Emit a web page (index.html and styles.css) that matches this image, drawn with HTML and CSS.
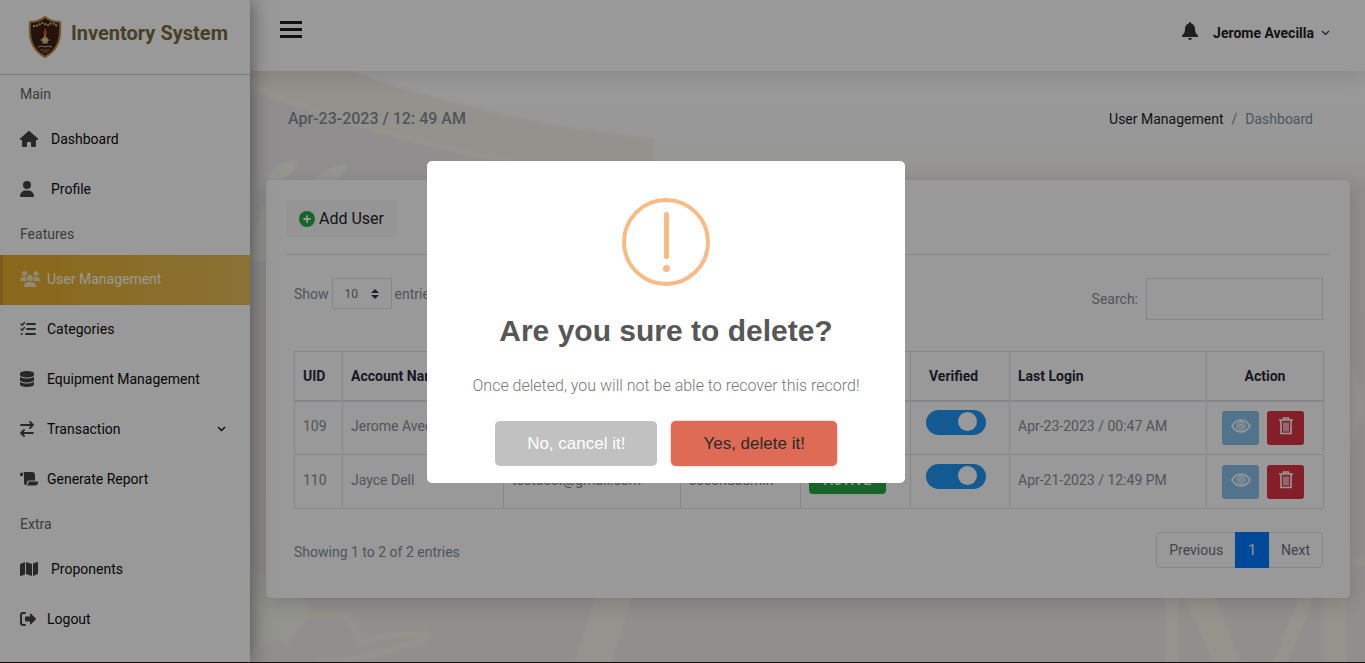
FILE: index.html
```html
<!DOCTYPE html>
<html lang="en">
<head>
<meta charset="utf-8">
<meta name="viewport" content="width=device-width, initial-scale=1">
<title>Inventory System</title>
<link rel="stylesheet" href="styles.css">
</head>
<body>
<div class="app">
  <aside class="sidebar">
    <div class="brand">
      <svg class="brand-logo" width="34" height="42" viewBox="0 0 34 42" aria-hidden="true">
        <path d="M17 1C12 5 7 6 2 6C1 20 2 33 17 41C32 33 33 20 32 6C27 6 22 5 17 1Z" fill="#3c1f18" stroke="#c48a3a" stroke-width="2"/>
        <path d="M5 10Q10 10 12 8T17 8T22 8T29 10" fill="none" stroke="#cdbb84" stroke-width="2" stroke-dasharray="2 1"/>
        <path d="M17 12C20 16 19 18 17 20C15 18 15 16 17 12Z" fill="#c9502a"/>
        <path d="M16 18h2v4h-2z" fill="#e0893a"/>
        <circle cx="17" cy="24" r="3" fill="#d9cf86"/>
        <path d="M12 24h10M14 27h6M10 31Q14 29 17 31Q20 29 24 31" fill="none" stroke="#c5bc83" stroke-width="1"/>
        <path d="M12 34h10M14 36h6" stroke="#97784a" stroke-width="1"/>
      </svg>
      <span class="brand-name">Inventory System</span>
    </div>
    <nav class="menu" aria-label="Main menu">
      <h2 class="menu-heading">Main</h2>
      <a class="menu-item" href="#"><span class="menu-icon menu-icon-wide"><svg width="18" height="16" viewBox="0 0 576 512"><path fill="currentColor" d="M575.8 255.5c0 18-15 32.1-32 32.1h-32l.7 160.2c0 2.7-.2 5.4-.5 8.1V472c0 22.1-17.9 40-40 40H392c-22.1 0-40-17.9-40-40V384c0-17.7-14.3-32-32-32H256c-17.7 0-32 14.3-32 32v88c0 22.1-17.9 40-40 40H104c-22.1 0-40-17.9-40-40V287.600H32c-18 0-32-14-32-32.100c0-9 3-17 10-24L266.400 8c7-7 15-8 22-8s15 2 21 7L564.800 231.500c8 7 12 15 11 24z"/></svg></span>Dashboard</a>
      <a class="menu-item" href="#"><span class="menu-icon menu-icon-wide"><svg width="14" height="16" viewBox="0 0 448 512"><path fill="currentColor" d="M224 256A128 128 0 1 0 224 0a128 128 0 1 0 0 256zm-45.700 48C79.800 304 0 383.800 0 482.300C0 498.700 13.300 512 29.700 512H418.300c16.400 0 29.700-13.300 29.700-29.700C448 383.800 368.200 304 269.700 304H178.300z"/></svg></span>Profile</a>
      <h2 class="menu-heading">Features</h2>
      <a class="menu-item menu-item-active" href="#" aria-current="page"><span class="menu-icon"><svg width="20" height="16" viewBox="0 0 640 512"><path fill="currentColor" d="M144 0a80 80 0 1 1 0 160A80 80 0 1 1 144 0zM512 0a80 80 0 1 1 0 160A80 80 0 1 1 512 0zM0 298.700C0 239.800 47.800 192 106.700 192h42.700c15.900 0 31 3.500 44.600 9.700c-1.300 7.200-1.900 14.700-1.900 22.300c0 38.200 16.800 72.500 43.300 96H21.300C9.600 320 0 310.400 0 298.700zM405.300 320c26.600-23.500 42.600-57.800 42.600-96c0-7.600-.7-15-1.900-22.300c13.600-6.300 28.700-9.700 44.600-9.700h42.700C592.200 192 640 239.800 640 298.700c0 11.800-9.600 21.300-21.300 21.300H405.300zM224 224a96 96 0 1 1 192 0 96 96 0 1 1 -192 0zM128 485.300C128 411.700 187.700 352 261.300 352H378.700C452.300 352 512 411.700 512 485.300c0 14.700-11.900 26.700-26.700 26.700H154.700c-14.700 0-26.700-11.900-26.700-26.700z"/></svg></span>User Management</a>
      <a class="menu-item" href="#"><span class="menu-icon"><svg width="16" height="16" viewBox="0 0 16 16" fill="none" stroke="currentColor" stroke-linecap="round"><path stroke-width="1.300" d="M1 3l1.200 1.200L4.500 1.500M1 8l1.200 1.200L4.500 6.500"/><path stroke-width="1.900" d="M7 3h8M7 8h8M6 13h9M1.700 13h.1"/></svg></span>Categories</a>
      <a class="menu-item" href="#"><span class="menu-icon"><svg width="14" height="16" viewBox="0 0 448 512"><path fill="currentColor" d="M448 80v48c0 44.200-100.300 80-224 80S0 172.200 0 128V80C0 35.800 100.300 0 224 0S448 35.800 448 80zM393.200 214.700c20.800-7.400 39.900-16.900 54.800-28.600V288c0 44.200-100.300 80-224 80S0 332.200 0 288V186.100c14.900 11.800 34 21.200 54.800 28.600C99.700 230.700 159.500 240 224 240s124.300-9.300 169.200-25.300zM0 346.100c14.900 11.800 34 21.200 54.800 28.600C99.700 390.700 159.500 400 224 400s124.300-9.300 169.200-25.300c20.800-7.400 39.900-16.900 54.800-28.600V432c0 44.200-100.300 80-224 80S0 476.200 0 432V346.100z"/></svg></span>Equipment Management</a>
      <a class="menu-item" href="#"><span class="menu-icon"><svg width="14" height="16" viewBox="0 0 14 16" fill="none" stroke="currentColor" stroke-width="1.800" stroke-linecap="round" stroke-linejoin="round"><path d="M1 4h12M10 1l3 3-3 3M13 12H1M4 9l-3 3 3 3"/></svg></span>Transaction<svg class="menu-caret" width="9" height="6" viewBox="0 0 9 6" fill="none" stroke="currentColor" stroke-width="1.300"><path d="M1 1l3.500 3.500L8 1"/></svg></a>
      <a class="menu-item" href="#"><span class="menu-icon"><svg width="18" height="16" viewBox="0 0 18 16" fill="currentColor"><path d="M0 3a1.500 1.500 0 0 1 3 0v2H1q-1 0-1-1zM3.500 1H12q3 0 3 3v5.500H9q-2 0-2 2v1q0 1.500-1.300 1.500Q4 14 4 12V4q0-2-.5-3z"/><path d="M8.500 10.500H18v1q0 3-3 3H7q1.500-1 1.500-4z"/></svg></span>Generate Report</a>
      <h2 class="menu-heading">Extra</h2>
      <a class="menu-item" href="#"><span class="menu-icon menu-icon-wide"><svg width="18" height="16" viewBox="0 0 18 16" fill="currentColor"><path d="M5 1v12.500L1 15q-1 .3-1-.7V4q0-1 .8-1.300zM6 1l6 2v12l-6-2zM13 2.500L17 1q1-.3 1 .7V12q0 1-.8 1.300L13 15z"/></svg></span>Proponents</a>
      <a class="menu-item" href="#"><span class="menu-icon"><svg width="16" height="16" viewBox="0 0 16 16"><path d="M5 2H3Q1 2 1 4v8q0 2 2 2h2" fill="none" stroke="currentColor" stroke-width="2" stroke-linecap="round"/><path fill="currentColor" d="M10 3.500q0-1.500 1-.7l4.600 4.400q.7.800 0 1.600L11 13.200q-1 .8-1-.7V10.500H6q-1 0-1-1v-3q0-1 1-1h4z"/></svg></span>Logout</a>
    </nav>
  </aside>

  <div class="page">
    <header class="topbar">
      <button class="burger" type="button" aria-label="Toggle menu"><span></span><span></span><span></span></button>
      <div class="account">
        <button class="plain-button" type="button" aria-label="Notifications"><svg class="bell" width="16" height="18" viewBox="0 0 16 18" fill="currentColor"><path d="M8 0q1.200 0 1.200 1.500Q13 2.500 13 7q0 4 3 6.500V15H0v-1.500Q3 11 3 7q0-4.500 3.800-5.500Q6.800 0 8 0zM6 16h4q-.3 2-2 2t-2-2z"/></svg></button>
        <button class="plain-button account-name" type="button">Jerome Avecilla<svg width="9" height="6" viewBox="0 0 9 6" fill="none" stroke="currentColor" stroke-width="1.200"><path d="M1 1l3.500 3.500L8 1"/></svg></button>
      </div>
    </header>

    <main class="content">
      <svg class="backdrop" viewBox="0 0 1115 592" preserveAspectRatio="xMidYMid slice" aria-hidden="true">
        <defs>
          <linearGradient id="sky" x1="0" y1="0" x2="0" y2="1"><stop offset="0" stop-color="#fff"/><stop offset=".11" stop-color="#fdfdfd"/><stop offset=".15" stop-color="#fafbf4"/><stop offset=".2" stop-color="#f3eeea"/><stop offset="1" stop-color="#f1efed"/></linearGradient>
          <filter id="soft"><feGaussianBlur stdDeviation="1.500"/></filter>
        </defs>
        <rect width="1115" height="592" fill="url(#sky)"/>
        <g filter="url(#soft)">
          <path d="M-10 15Q200 85 404 115V200H-10z" fill="#f0edef"/>
          <path d="M-10-10H75Q230 50 404 68V115Q190 95 -10 14z" fill="#f7f3eb"/>
          <path d="M-10 12Q170 82 300 95" fill="none" stroke="#f8f7ec" stroke-width="6"/>
          <path d="M14 112Q26 88 48 90Q44 102 32 112zM62 112Q76 94 98 93Q94 104 82 112z" fill="#f8faf0"/>
          <path d="M5 160Q10 140 16 130V190H5z" fill="#f8faf1"/>
          <path d="M0 500L45 522Q62 535 60 545Q45 560 38 575Q20 560 0 592z" fill="#f6f7ed"/>
          <path d="M60 544H94Q105 550 110 572Q140 562 175 562Q180 568 172 570L90 592H65" fill="none" stroke="#f6f5ea" stroke-width="7"/>
          <path d="M348 520H384L362 592H324z" fill="#f8f5ec"/>
          <path d="M922 525V600M1086 525V600" fill="none" stroke="#f8f7ea" stroke-width="12"/>
          <path d="M932 520H962L994 600H968zM1052 520H1066L1034 600H1020zM1074 520H1096V600H1074z" fill="#f8f7ea"/>
          <path d="M1100 491h20" stroke="#f9f7e8" stroke-width="4"/>
          <path d="M1100 290Q1112 310 1112 340Q1110 355 1100 380z" fill="#fbf4ec"/>
        </g>
      </svg>
      <div class="page-head">
        <h1 class="page-date">Apr-23-2023 / 12: 49 AM</h1>
        <nav class="crumbs" aria-label="Breadcrumb"><a href="#">User Management</a><span>/</span><span>Dashboard</span></nav>
      </div>

      <section class="card">
        <div class="card-head">
          <button class="add-button" type="button"><svg width="16" height="16" viewBox="0 0 16 16"><circle cx="8" cy="8" r="8" fill="#28a745"/><path d="M8 5v6M5 8h6" stroke="#fff" stroke-width="1.800" stroke-linecap="round"/></svg>Add User</button>
        </div>
        <div class="card-body">
          <div class="filters">
            <label class="length">Show
              <span class="select-wrap"><select class="length-select"><option>10</option><option>25</option><option>50</option></select><svg width="8" height="10" viewBox="0 0 8 10" fill="#343a40" aria-hidden="true"><path d="M4 0l4 4H0zM4 10l4-4H0z"/></svg></span>
              entries</label>
            <label class="search">Search:<input class="search-input" type="search"></label>
          </div>
          <table class="users">
            <colgroup><col class="c-uid"><col class="c-name"><col class="c-mail"><col class="c-user"><col class="c-status"><col class="c-verified"><col class="c-login"><col class="c-action"></colgroup>
            <thead><tr><th>UID</th><th>Account Name</th><th></th><th></th><th></th><th class="center-left">Verified</th><th>Last Login</th><th class="center">Action</th></tr></thead>
            <tbody>
              <tr>
                <td>109</td><td>Jerome Avecilla</td><td></td><td></td><td></td>
                <td><input class="switch" type="checkbox" aria-label="Verified, Jerome Avecilla" checked></td>
                <td>Apr-23-2023 / 00:47 AM</td>
                <td><div class="actions"><button class="act act-view" type="button" aria-label="View"><svg width="20" height="14" viewBox="0 0 20 14" fill="none" stroke="currentColor"><path stroke-width="1.500" d="M1 7Q4.500 1 10 1t9 6q-3.500 6-9 6T1 7z"/><circle cx="10" cy="7" r="4" stroke-width="1.300"/><circle cx="10" cy="7" r="1.700" stroke-width="1.200"/></svg></button><button class="act act-delete" type="button" aria-label="Delete"><svg width="14" height="18" viewBox="0 0 14 18" fill="none" stroke="currentColor"><path stroke-width="1.600" d="M0 3h14M4.500 2.500V1h5v1.500M2 3v13.500h10V3"/><path stroke-width="1.200" d="M5 5.500v9M7 5.500v9M9 5.500v9"/></svg></button></div></td>
              </tr>
              <tr>
                <td>110</td><td>Jayce Dell</td><td>testacct@gmail.com</td><td>secondadmin</td><td><span class="badge">ACTIVE</span></td>
                <td><input class="switch" type="checkbox" aria-label="Verified, Jayce Dell" checked></td>
                <td>Apr-21-2023 / 12:49 PM</td>
                <td><div class="actions"><button class="act act-view" type="button" aria-label="View"><svg width="20" height="14" viewBox="0 0 20 14" fill="none" stroke="currentColor"><path stroke-width="1.500" d="M1 7Q4.500 1 10 1t9 6q-3.500 6-9 6T1 7z"/><circle cx="10" cy="7" r="4" stroke-width="1.300"/><circle cx="10" cy="7" r="1.700" stroke-width="1.200"/></svg></button><button class="act act-delete" type="button" aria-label="Delete"><svg width="14" height="18" viewBox="0 0 14 18" fill="none" stroke="currentColor"><path stroke-width="1.600" d="M0 3h14M4.500 2.500V1h5v1.500M2 3v13.500h10V3"/><path stroke-width="1.200" d="M5 5.500v9M7 5.500v9M9 5.500v9"/></svg></button></div></td>
              </tr>
            </tbody>
          </table>
          <div class="table-foot">
            <p class="summary">Showing 1 to 2 of 2 entries</p>
            <nav class="pager" aria-label="Pages"><a href="#">Previous</a><a class="pager-current" href="#" aria-current="page">1</a><a href="#">Next</a></nav>
          </div>
        </div>
      </section>
    </main>
  </div>
</div>

<div class="overlay">
  <div class="dialog" role="alertdialog" aria-modal="true" aria-labelledby="dialog-title" aria-describedby="dialog-text">
    <svg class="dialog-icon" width="88" height="88" viewBox="0 0 88 88" aria-hidden="true"><circle cx="44" cy="44" r="42" fill="none" stroke="#f8bb86" stroke-width="4"/><rect x="42" y="14" width="5" height="47" rx="2" fill="#f8bb86"/><circle cx="44.500" cy="70.500" r="3.500" fill="#f8bb86"/></svg>
    <h2 class="dialog-title" id="dialog-title">Are you sure to delete?</h2>
    <p class="dialog-text" id="dialog-text">Once deleted, you will not be able to recover this record!</p>
    <div class="dialog-buttons">
      <button class="dialog-button cancel" type="button">No, cancel it!</button>
      <button class="dialog-button confirm" type="button">Yes, delete it!</button>
    </div>
  </div>
</div>
</body>
</html>
```

FILE: styles.css
```css
* { box-sizing: border-box; }

body {
  margin: 0;
  font-family: Roboto, "Liberation Sans", sans-serif;
  font-size: 14px;
  line-height: 20px;
  color: #868e96;
}

h1, h2, p { margin: 0; }
a { color: inherit; text-decoration: none; }
button, input, select { font: inherit; color: inherit; }
button { cursor: pointer; }
svg { display: block; flex: none; }

.app { display: flex; min-height: 100vh; }

/* Sidebar */
.sidebar {
  position: relative;
  z-index: 2;
  flex: none;
  width: 250px;
  background: #fff;
  box-shadow: 0 0 20px rgba(0, 0, 0, .5);
}
.brand {
  display: flex;
  align-items: center;
  gap: 9px;
  height: 75px;
  padding: 0 20px 0 28px;
  border-bottom: 1px solid #ccc;
}
.brand-name { font-size: 20px; font-weight: 700; line-height: 24px; color: #796b3e; padding-bottom: 8px; }
.menu { color: #0b0b0b; }
.menu-heading {
  height: 40px;
  padding: 0 20px;
  font-size: 14px;
  font-weight: 400;
  line-height: 38px;
  color: #666;
}
.menu-item {
  display: flex;
  align-items: center;
  height: 50px;
  padding: 0 24px 2px 20px;
}
.menu-icon { width: 27px; color: #444; }
.menu-icon-wide { width: 31px; }
.menu-caret { margin-left: auto; }
.menu-item-active {
  color: #fffdf5;
  background: linear-gradient(90deg, #e6ac2a, #e6be5a);
  box-shadow: inset 3px 0 #cc9c36;
}
.menu-item-active .menu-icon { color: #f0e4c4; }

/* Page column */
.page { display: flex; flex: 1; flex-direction: column; min-width: 0; }
.topbar {
  position: relative;
  z-index: 1;
  display: flex;
  align-items: center;
  justify-content: space-between;
  height: 71px;
  padding: 0 35px 6px 30px;
  background: #fff;
  box-shadow: 0 4px 20px rgba(0, 0, 0, .12);
}
.burger {
  display: grid;
  gap: 4px;
  width: 22px;
  padding: 0 0 6px;
  border: 0;
  background: none;
}
.burger span { height: 3px; background: #1c1c1c; }
.account { display: flex; align-items: center; gap: 15px; color: #222; }
.plain-button { padding: 0; border: 0; background: none; }
.plain-button svg { color: #333; }
.bell { margin-bottom: 3px; }
.account-name { display: flex; align-items: center; gap: 7px; font-weight: 700; }

.content { position: relative; flex: 1; padding: 36px 15px 16px 16px; overflow: hidden; }
.backdrop { position: absolute; inset: 0; width: 100%; height: 100%; }
.page-head {
  position: relative;
  display: flex;
  align-items: center;
  justify-content: space-between;
  padding: 0 37px 49px 22px;
}
.page-date { font-size: 16px; font-weight: 500; line-height: 24px; color: #868e96; }
.crumbs { display: flex; gap: 8px; }
.crumbs a { color: #212529; }

/* Card */
.card {
  position: relative;
  padding: 20px 21px 26px 20px;
  background: #fff;
  border-radius: 4px;
  box-shadow: 0 0 1px rgba(0, 0, 0, .2), 0 6px 20px rgba(0, 0, 0, .14);
}
.card-head { padding-bottom: 17px; border-bottom: 1px solid #e2e2e2; }
.add-button {
  display: flex;
  align-items: center;
  gap: 4px;
  height: 37px;
  padding: 0 13px;
  border: 0;
  border-radius: 4px;
  background: #f8f8f9;
  color: #212529;
  font-size: 16px;
}
.card-body { padding: 23px 6px 0 8px; }
.filters { display: flex; align-items: flex-start; justify-content: space-between; height: 73px; }
.length { display: flex; align-items: center; gap: 3px; }
.select-wrap { position: relative; }
.select-wrap svg { position: absolute; right: 13px; top: 11px; pointer-events: none; }
.length-select {
  display: block;
  width: 60px;
  height: 31px;
  padding: 0 12px;
  appearance: none;
  border: 1px solid #dee2e6;
  border-radius: 0;
  background: #fff;
  color: #6b7278;
  font-size: 12px;
}
.search { display: flex; align-items: center; gap: 8px; }
.search-input { width: 177px; height: 42px; padding: 0 12px; border: 1px solid #dee0e2; background: #fff; }

.users {
  width: 100%;
  table-layout: fixed;
  border-collapse: collapse;
}
.c-uid { width: 48px; }
.c-name { width: 161px; }
.c-mail { width: 177px; }
.c-user { width: 120px; }
.c-status { width: 110px; }
.c-verified { width: 99px; }
.c-login { width: 197px; }
.c-action { width: 117px; }
.users th, .users td { padding: 0 8px; border: 1px solid #dee2e6; text-align: left; }
.users th { height: 49px; border-bottom-width: 2px; font-weight: 700; color: #2a2a3c; }
.users td { height: 54px; padding-bottom: 4px; }
.users .center { text-align: center; }
.users .center-left { padding-left: 18px; }
.badge {
  display: block;
  width: 77px;
  border-radius: 4px;
  background: #28a745;
  color: #fff;
  font-weight: 500;
  line-height: 28px;
  text-align: center;
}
.switch {
  display: block;
  width: 60px;
  height: 25px;
  margin: 0 0 6px 7px;
  padding: 2px 9px;
  appearance: none;
  border-radius: 13px;
  background: #2196f3;
}
.switch::before {
  content: "";
  display: block;
  width: 19px;
  height: 19px;
  margin-left: auto;
  border-radius: 50%;
  background: #fff;
}
.actions { display: flex; justify-content: center; gap: 8px; padding: 4px 4px 0 0; }
.act {
  display: grid;
  place-items: center;
  width: 37px;
  height: 34px;
  padding: 0 0 4px;
  border: 0;
  border-radius: 3px;
  color: #fff;
}
.act-view { background: #87c1e9; }
.act-delete { background: #dc3545; }

.table-foot { display: flex; align-items: flex-start; justify-content: space-between; padding-top: 23px; }
.summary { line-height: 40px; }
.pager {
  display: flex;
  border: 1px solid #dee2e6;
  border-radius: 4px;
  color: #6c757d;
  line-height: 34px;
}
.pager a { padding: 0 12px; }
.pager .pager-current { margin: -1px 0; padding: 1px 13px; background: #007bff; color: #fff; }

/* Confirmation dialog */
.overlay {
  position: fixed;
  inset: 0;
  z-index: 10;
  display: flex;
  align-items: center;
  justify-content: center;
  padding: 0 33px 18px 0;
  background: rgba(0, 0, 0, .4);
  border-bottom: 1px solid #151113;
}
.dialog {
  display: flex;
  flex-direction: column;
  align-items: center;
  width: 478px;
  max-width: 100%;
  padding: 37px 17px 17px;
  border-radius: 5px;
  background: #fff;
  text-align: center;
}
.dialog-title {
  margin-top: 25px;
  font-family: "Liberation Sans", Arial, sans-serif;
  font-size: 30px;
  font-weight: 700;
  line-height: 40px;
  color: #575757;
}
.dialog-text { margin-top: 23px; font-size: 16px; font-weight: 300; line-height: 24px; color: #797979; }
.dialog-buttons { display: flex; gap: 14px; margin-top: 23px; }
.dialog-button {
  height: 45px;
  padding: 0 32px;
  border: 0;
  border-radius: 5px;
  font-family: "Liberation Sans", Arial, sans-serif;
  font-size: 17px;
}
.cancel { background: #c1c1c1; color: #fff; }
.confirm { background: #dd6b55; color: #2b2b2b; box-shadow: 0 0 2px rgba(221, 107, 85, .8); }
```
